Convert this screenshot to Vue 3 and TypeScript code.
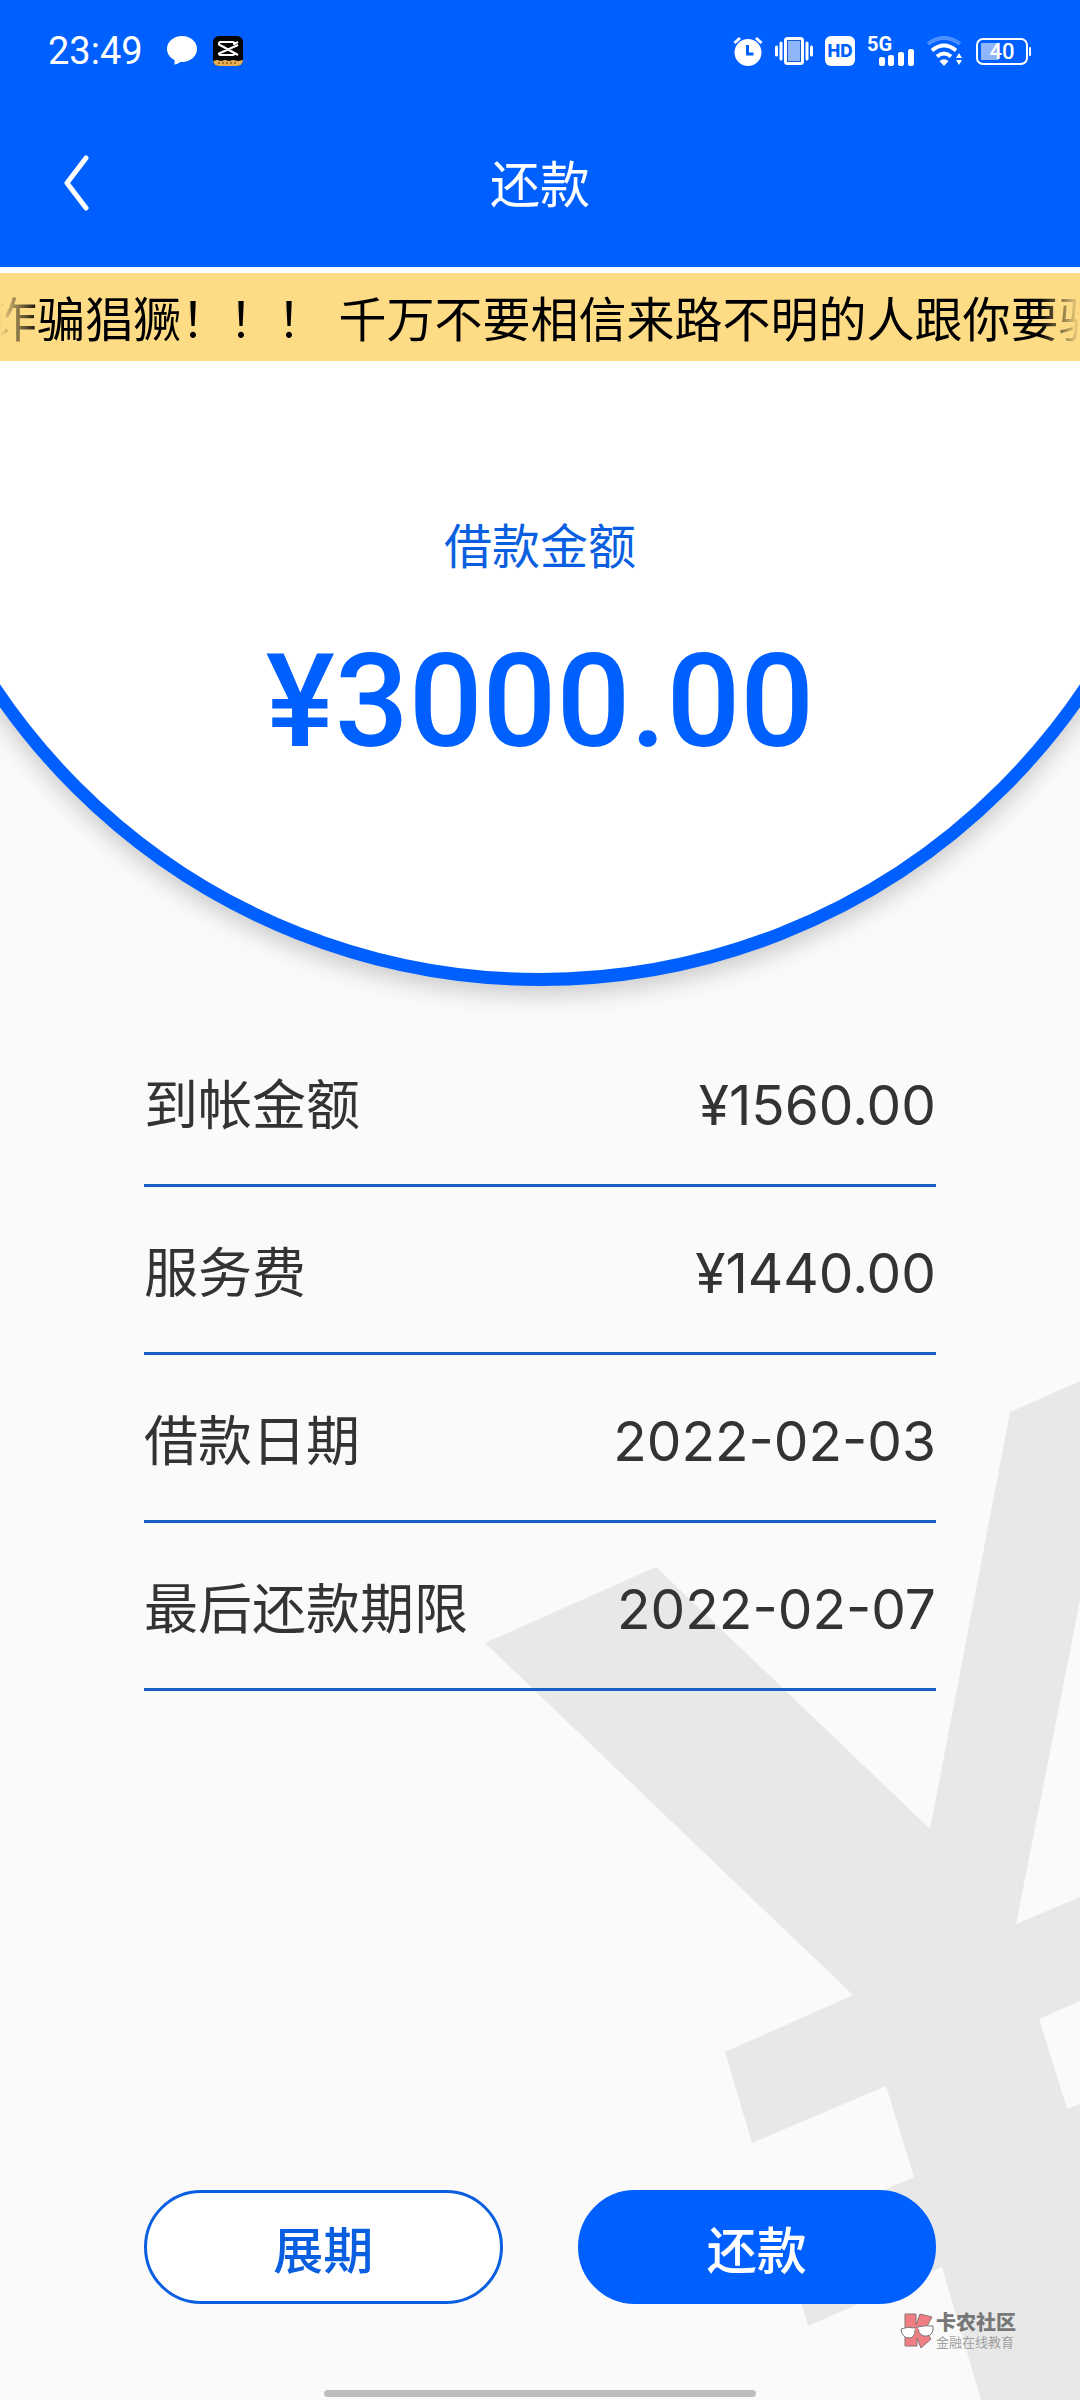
<script setup lang="ts">
interface DetailRow {
  label: string
  value: string
}

const notice = '诈骗猖獗！！！ 千万不要相信来路不明的人跟你要验'
const amount = '¥3000.00'

const rows: DetailRow[] = [
  { label: '到帐金额', value: '¥1560.00' },
  { label: '服务费', value: '¥1440.00' },
  { label: '借款日期', value: '2022-02-03' },
  { label: '最后还款期限', value: '2022-02-07' },
]
</script>

<template>
  <div class="page" lang="zh-CN">
    <svg class="yen" viewBox="485 1381 595 1019" aria-hidden="true">
      <path
        fill="#e8e8e8"
        d="M485 1643 656 1567 930 1829 1010 1412 1080 1381V1600L1016 1924 1080 1897V2001L1039 2019 1067 2109 1080 2104V2400H981L942 2267 808 2326 781 2235 914 2177 886 2086 752 2143 725 2052 853 1995Z"
      />
    </svg>

    <header class="top">
      <div class="status">
        <div class="status-left">
          <time class="clock">23:49</time>
          <svg width="30" height="30" viewBox="0 0 30 30" aria-hidden="true">
            <path fill="#fff" d="M15 0C6.500 0 0 5.600 0 13c0 4.600 2.800 8.700 7.400 11 .4 1.700.3 3.200-.2 4.600 2.300-.4 4.300-1.400 5.800-2.700 9.700.8 17-5.200 17-12.900C30 5.600 23.500 0 15 0Z" />
          </svg>
          <svg width="30" height="30" viewBox="0 0 30 30" aria-hidden="true">
            <defs>
              <clipPath id="app-shape"><rect width="30" height="30" rx="6" /></clipPath>
            </defs>
            <g clip-path="url(#app-shape)">
              <rect width="30" height="30" fill="#050505" />
              <path fill="#e9ae52" d="M0 25 4 24 8 25 12 24 16 25 20 24 25 25 30 24V30H0Z" />
              <path d="M5 27h20" stroke="#5b3d10" stroke-width="1" stroke-dasharray="2 2" />
              <path d="M25 6 21 8V6.500Q21 6 20 6H7.500Q6 6 6 7.500V8.500L25 19M25 9 6 17.500V18Q6 19 7.500 19H20Q21 19 21 18V17" fill="none" stroke="#fff" stroke-width="2" stroke-linejoin="round" />
            </g>
          </svg>
        </div>
        <div class="status-right">
          <svg width="30" height="30" viewBox="0 0 30 30" aria-hidden="true">
            <circle cx="15" cy="16.500" r="13.500" fill="#fff" />
            <path d="M1.500 7 7 2M28.500 7 23 2" stroke="#fff" stroke-width="3" />
            <path d="M14.500 9V18H20.500" fill="none" stroke="#0060ff" stroke-width="3" />
          </svg>
          <svg width="38" height="30" viewBox="0 0 38 30" aria-hidden="true">
            <rect x="10.500" y="2.500" width="17" height="25" rx="2" fill="#8fb5fa" stroke="#fff" stroke-width="3" />
            <rect x="12.500" y="4.500" width="13" height="21" fill="none" stroke="#1a5fd0" />
            <path d="M1.500 11v8M36.500 11v8M6 7v16M32 7v16" stroke="#fff" stroke-width="3" stroke-linecap="round" />
          </svg>
          <span class="hd">HD</span>
          <span class="cell">
            <span class="cell-type">5G</span>
            <svg class="cell-bars" width="35" height="17" viewBox="0 0 35 17" aria-hidden="true">
              <path fill="#fff" d="M2 8h2q2 0 2 2v5q0 2-2 2H2q-2 0-2-2v-5q0-2 2-2ZM11 6h2q2 0 2 2v7q0 2-2 2h-2q-2 0-2-2V8q0-2 2-2ZM21 3h2q2 0 2 2v10q0 2-2 2h-2q-2 0-2-2V5q0-2 2-2ZM31 0h2q2 0 2 2v13q0 2-2 2h-2q-2 0-2-2V2q0-2 2-2Z" />
            </svg>
          </span>
          <svg width="38" height="30" viewBox="0 0 38 30" aria-hidden="true">
            <g fill="none" stroke-width="4">
              <path d="M2 8Q18 -4 34 8" stroke="#4d90ff" />
              <path d="M6 14.500Q18 4.500 30 14.500" stroke="#fff" />
              <path d="M11 20.500Q18 14.500 25 20.500" stroke="#fff" />
            </g>
            <path fill="#fff" d="M13.500 25Q18 21.500 22.500 25L18 30ZM30 22 33 17 36 22ZM30 24H36L33 29Z" />
          </svg>
          <span class="battery">
            <span class="battery-text">40</span>
          </span>
        </div>
      </div>
      <nav class="nav">
        <button class="back" type="button" aria-label="返回">
          <svg width="26" height="56" viewBox="0 0 26 56" aria-hidden="true">
            <path d="M22 3 3 28 22 53" fill="none" stroke="#fff" stroke-width="5" stroke-linecap="round" stroke-linejoin="round" />
          </svg>
        </button>
        <h1 class="title">还款</h1>
      </nav>
    </header>

    <div class="notice">
      <p class="notice-text">{{ notice }}</p>
    </div>

    <section class="hero">
      <div class="disc"></div>
      <h2 class="hero-label">借款金额</h2>
      <p class="hero-amount">{{ amount }}</p>
    </section>

    <dl class="details">
      <div v-for="row in rows" :key="row.label" class="row">
        <dt>{{ row.label }}</dt>
        <dd>{{ row.value }}</dd>
      </div>
    </dl>

    <div class="actions">
      <button class="action outline" type="button">展期</button>
      <button class="action solid" type="button">还款</button>
    </div>

    <footer class="footer">
      <div class="brand">
        <svg width="34" height="36" viewBox="0 0 34 36" aria-hidden="true">
          <path d="M5 1H16V12L20 1 32 4 25 17 31 26 21 35 17 25V33H5Z" fill="#f07c84" stroke="#8a7474" stroke-width="1" />
          <path d="M1 16Q8 13 15 15L18 14Q25 12 33 13Q34 22 27 23Q20 24 18 16L15 17Q15 25 9 25Q2 25 1 16Z" fill="#fff" stroke="#777" stroke-width="1" />
          <path d="M15 15.500 18 14.500V17L15 18Z" fill="#f07c84" />
        </svg>
        <span class="brand-text">
          <span class="brand-name">卡农社区</span>
          <span class="brand-sub">金融在线教育</span>
        </span>
      </div>
      <div class="home-bar"></div>
    </footer>
  </div>
</template>

<style>
body {
  margin: 0;
  background: #fafafa;
}
</style>

<style scoped>
.page {
  position: relative;
  display: flex;
  flex-direction: column;
  min-height: 100vh;
  overflow: hidden;
  background: #fafafa;
  color: #333;
  font-family: Inter, "Noto Sans CJK SC", sans-serif;
}

.page h1,
.page h2,
.page p,
.page dl,
.page dd {
  margin: 0;
  font-weight: 400;
}

.page button {
  font-family: inherit;
  cursor: pointer;
}

.page svg {
  display: block;
}

.yen {
  position: absolute;
  right: 0;
  bottom: 0;
  width: 55.1%;
}

.top {
  background: #0060ff;
  color: #fff;
}

.status {
  display: flex;
  align-items: center;
  justify-content: space-between;
  height: 102px;
  padding: 0 48px;
}

.status-left {
  display: flex;
  align-items: center;
  gap: 16px;
}

.clock {
  margin-right: 8px;
  font-family: Roboto, sans-serif;
  font-size: 38px;
  line-height: 48px;
}

.status-right {
  display: flex;
  align-items: center;
  gap: 12px;
}

.hd {
  width: 30px;
  border-radius: 6px;
  background: #fff;
  color: #0060ff;
  font-size: 17px;
  font-weight: 800;
  line-height: 30px;
  text-align: center;
}

.cell {
  position: relative;
  width: 47px;
  height: 30px;
}

.cell-type {
  display: block;
  font-family: Roboto, sans-serif;
  font-size: 20px;
  font-weight: 700;
  line-height: 16px;
}

.cell-bars {
  position: absolute;
  right: 0;
  bottom: 0;
}

.battery {
  position: relative;
  box-sizing: border-box;
  width: 52px;
  height: 27px;
  margin-right: 4px;
  border: 2px solid #fff;
  border-radius: 7px;
  background: linear-gradient(#8fb5fa, #8fb5fa) 3px 3px / 17px 17px no-repeat;
  font-family: Roboto, sans-serif;
  font-size: 22px;
  font-weight: 500;
  line-height: 24px;
  text-align: center;
}

.battery::after {
  position: absolute;
  top: 7px;
  right: -5px;
  width: 2px;
  height: 9px;
  border-radius: 1px;
  background: #fff;
  content: "";
}

.nav {
  display: grid;
  grid-template-columns: 1fr auto 1fr;
  align-items: center;
  height: 165px;
  padding: 0 64px;
}

.back {
  justify-self: start;
  padding: 0 0 4px;
  border: 0;
  background: none;
}

.title {
  font-size: 50px;
  line-height: 60px;
}

.notice {
  overflow: hidden;
  border-top: 6px solid #fff;
  background: #fedc86;
}

.notice-text {
  overflow: hidden;
  padding-top: 6px;
  color: #000;
  font-size: 48px;
  line-height: 82px;
  text-indent: -11px;
  white-space: nowrap;
  mask-image: linear-gradient(90deg, transparent, #000 40px, #000 calc(100% - 40px), transparent);
}

.hero {
  position: relative;
  display: flex;
  flex-direction: column;
  align-items: center;
  gap: 72px;
  overflow: hidden;
  padding: 156px 0 264px;
}

.disc {
  position: absolute;
  bottom: 33px;
  left: 50%;
  box-sizing: border-box;
  width: 1324px;
  height: 1324px;
  border: 13px solid #0060ff;
  border-radius: 50%;
  background: #fff;
  box-shadow: 0 8px 24px rgba(0, 0, 0, 0.2);
  transform: translateX(-50%);
}

.hero-label,
.hero-amount {
  position: relative;
}

.hero-label {
  color: #0a5fe0;
  font-size: 48px;
  line-height: 60px;
}

.page .hero-amount {
  color: #0060ff;
  font-family: Roboto, sans-serif;
  font-size: 130px;
  font-weight: 500;
  line-height: 106px;
}

.details {
  position: relative;
  padding: 0 144px;
}

.row {
  display: flex;
  align-items: center;
  justify-content: space-between;
  height: 165px;
  border-bottom: 3px solid #1760c8;
  font-size: 54px;
}

.row dd {
  padding-top: 6px;
  font-size: 55px;
}

.actions {
  position: relative;
  display: flex;
  gap: 75px;
  margin-top: auto;
  padding: 96px 144px 0;
}

.action {
  flex: 1;
  box-sizing: border-box;
  height: 114px;
  border: 3px solid #0060ff;
  border-radius: 57px;
  font-size: 50px;
  font-weight: 500;
}

.outline {
  border-color: #0a5fe0;
  background: #fff;
  color: #0a5fe0;
}

.solid {
  background: #0060ff;
  color: #fff;
}

.footer {
  position: relative;
  display: flex;
  flex-direction: column;
  gap: 40px;
  padding: 8px 0 3px;
}

.brand {
  display: flex;
  align-items: center;
  align-self: flex-end;
  gap: 2px;
  margin-right: 64px;
}

.brand-text {
  display: flex;
  flex-direction: column;
}

.brand-name {
  color: #777;
  font-size: 20px;
  font-weight: 900;
  line-height: 22px;
}

.brand-sub {
  color: #a0a0a0;
  font-size: 13px;
  line-height: 16px;
}

.home-bar {
  align-self: center;
  width: 40%;
  height: 7px;
  border-radius: 4px;
  background: #bebebe;
}
</style>
